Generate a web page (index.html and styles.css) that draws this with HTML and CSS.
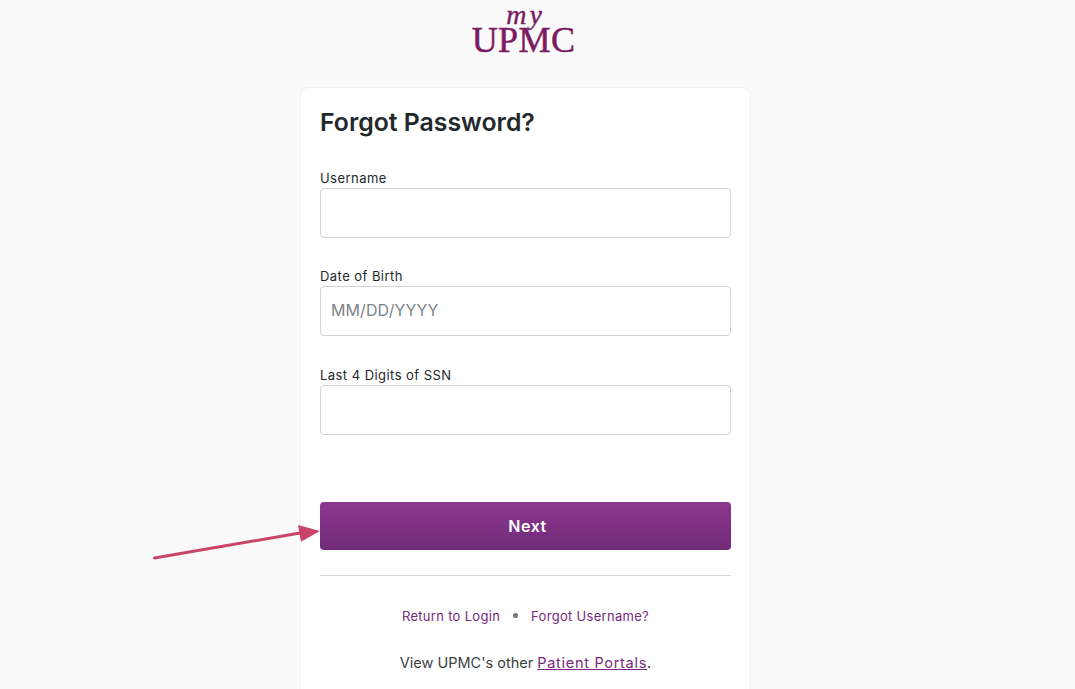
FILE: index.html
```html
<!DOCTYPE html>
<html>
  <head>
    <meta charset="utf-8" />
    <meta name="viewport" content="width=device-width, initial-scale=1.0" />
    <title>Forgot Password</title>
    <link rel="stylesheet" href="styles.css">
  </head>

  <body>
    <div id="wrap">
      <div class="logo">
        <span class="logoMy">my</span>
        <span class="logoName">UPMC</span>
      </div>

      <div class="card">
        <h1>Forgot Password?</h1>

        <div class="field">
          <label for="username">Username</label>
          <input type="text" id="username" />
        </div>
        <div class="field">
          <label for="dob">Date of Birth</label>
          <input type="text" id="dob" placeholder="MM/DD/YYYY" />
        </div>
        <div class="field">
          <label for="ssn">Last 4 Digits of SSN</label>
          <input type="text" id="ssn" />
        </div>

        <button id="next">Next</button>
        <hr />

        <div class="links">
          <a href="#">Return to Login</a>
          <span class="dot"></span>
          <a href="#">Forgot Username?</a>
        </div>
        <p class="other">View UPMC's other <a href="#">Patient Portals</a>.</p>
      </div>
    </div>

    <svg class="arrow" width="180" height="50" viewBox="0 0 180 50">
      <line x1="4.5" y1="39" x2="150" y2="14" stroke="#c94468" stroke-width="3" stroke-linecap="round" />
      <polygon points="148,6 151,22.7 170,12" fill="#c94468" />
    </svg>
  </body>
</html>
```

FILE: styles.css
```css
html,
body {
  height: 100%;
  margin: 0;
  overflow: hidden;
}

body {
  position: relative;
  background-color: #fafafa;
  font-family: "Inter", "Open Sans", sans-serif;
  color: #23282b;
}

#wrap {
  display: flex;
  flex-direction: column;
  align-items: center;
  width: 451px;
  height: 689px;
  margin-left: 300px;
}

.logo {
  height: 87px;
  flex: none;
  display: flex;
  flex-direction: column;
  align-items: center;
  box-sizing: border-box;
  padding-top: 4px;
  color: #7a1a62;
  margin-left: -4px;
}

.logoMy {
  font-family: "Liberation Serif", serif;
  font-style: italic;
  font-size: 28px;
  line-height: 22px;
  height: 20px;
  margin-left: 4px;
  letter-spacing: 3px;
  -webkit-text-stroke: 0.4px #7a1a62;
}

.logoName {
  font-family: "Liberation Serif", serif;
  font-size: 36px;
  line-height: 32px;
  letter-spacing: 0.4px;
  -webkit-text-stroke: 0.5px #7a1a62;
}

.card {
  width: 100%;
  box-sizing: border-box;
  height: 602px;
  flex: none;
  padding: 20px 19px 0;
  background-color: #fff;
  border: 1px solid #f0f0f0;
  border-bottom: none;
  border-radius: 8px 8px 0 0;
}

.card h1 {
  margin: 0 0 34.8px;
  font-size: 24.8px;
  line-height: 28px;
  font-weight: 600;
}

.field {
  margin-bottom: 31.5px;
}

.field label {
  display: block;
  font-size: 13px;
  line-height: 14px;
  height: 17px;
  letter-spacing: 0.45px;
  color: #23282b;
}

.field input {
  display: block;
  width: 100%;
  height: 50px;
  box-sizing: border-box;
  padding: 0 10px 2px;
  border: 1px solid #ced4d8;
  border-radius: 4px;
  font: inherit;
  font-size: 16px;
  letter-spacing: 0.1px;
  background: #fff;
}

.field input::placeholder {
  color: #7d8488;
}

#next {
  display: block;
  width: 100%;
  height: 48px;
  margin-top: 67px;
  padding-left: 10px;
  border: none;
  border-radius: 4px;
  background: linear-gradient(#8c378f, #702b78);
  color: #fff;
  font: inherit;
  font-size: 16px;
  font-weight: 600;
  letter-spacing: 0.5px;
}

hr {
  border: none;
  border-top: 1px solid #d5dadb;
  margin: 25px 0 0;
}

.links {
  display: flex;
  justify-content: center;
  align-items: center;
  gap: 13px;
  margin-top: 31px;
  font-size: 13px;
  line-height: 18px;
  letter-spacing: 0.3px;
}

.links a {
  color: #752a7c;
  text-decoration: none;
}

.dot {
  width: 5px;
  height: 5px;
  border-radius: 50%;
  background-color: #6c757d;
}

.other {
  margin: 29px 0 0;
  text-align: center;
  font-size: 14.5px;
  line-height: 18px;
  color: #3c4144;
}

.other a {
  color: #752a7c;
  letter-spacing: 0.7px;
}

.arrow {
  position: absolute;
  left: 150px;
  top: 519px;
}
```
